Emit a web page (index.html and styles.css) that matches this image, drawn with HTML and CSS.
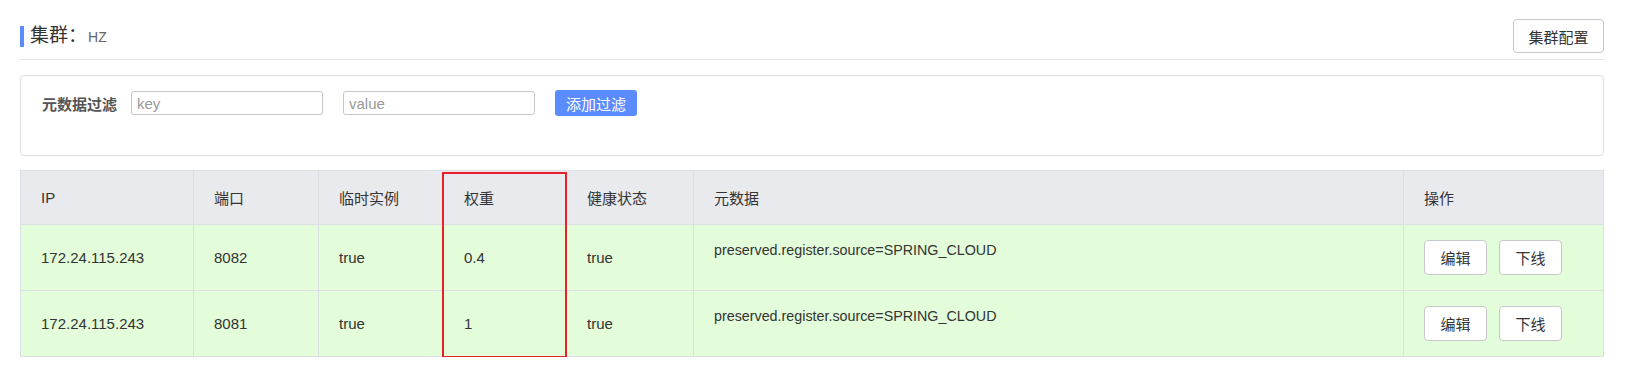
FILE: index.html
```html
<!DOCTYPE html>
<html lang="zh-CN">

<head>
    <meta charset="UTF-8">
    <meta name="viewport" content="width=device-width, initial-scale=1.0">
    <title>集群</title>
    <link rel="stylesheet" href="styles.css">
</head>

<body>
    <div class="page">
        <div class="page-header">
            <h1 class="title">集群：<small>HZ</small></h1>
            <button class="btn">集群配置</button>
        </div>

        <div class="filter-card">
            <div class="filter-row">
                <label>元数据过滤</label>
                <input type="text" placeholder="key">
                <input type="text" placeholder="value">
                <button class="btn-primary">添加过滤</button>
            </div>
        </div>

        <div class="table-wrap">
            <table class="instances">
                <colgroup>
                    <col style="width: 173px">
                    <col style="width: 125px">
                    <col style="width: 125px">
                    <col style="width: 123px">
                    <col style="width: 127px">
                    <col>
                    <col style="width: 200px">
                </colgroup>
                <thead>
                    <tr>
                        <th>IP</th>
                        <th>端口</th>
                        <th>临时实例</th>
                        <th>权重</th>
                        <th>健康状态</th>
                        <th>元数据</th>
                        <th>操作</th>
                    </tr>
                </thead>
                <tbody>
                    <tr>
                        <td>172.24.115.243</td>
                        <td>8082</td>
                        <td>true</td>
                        <td>0.4</td>
                        <td>true</td>
                        <td class="meta">preserved.register.source=SPRING_CLOUD</td>
                        <td>
                            <div class="ops">
                                <button class="btn btn-small">编辑</button>
                                <button class="btn btn-small">下线</button>
                            </div>
                        </td>
                    </tr>
                    <tr>
                        <td>172.24.115.243</td>
                        <td>8081</td>
                        <td>true</td>
                        <td>1</td>
                        <td>true</td>
                        <td class="meta">preserved.register.source=SPRING_CLOUD</td>
                        <td>
                            <div class="ops">
                                <button class="btn btn-small">编辑</button>
                                <button class="btn btn-small">下线</button>
                            </div>
                        </td>
                    </tr>
                </tbody>
            </table>
            <div class="highlight"></div>
        </div>
    </div>
</body>

</html>
```

FILE: styles.css
```css
* {
    font-family: "Liberation Sans", "Noto Sans CJK SC", sans-serif;
    box-sizing: border-box;
}

body {
    margin: 0;
    background-color: #FFFFFF;
    color: #333333;
}

.page {
    padding: 0 22px 0 20px;
}

.page-header {
    display: flex;
    justify-content: space-between;
    align-items: center;
    height: 60px;
    padding-top: 13px;
    border-bottom: 1px solid #E6E6E6;
}

.title {
    margin: 0;
    padding-left: 6px;
    border-left: 4px solid #5B8CFF;
    font-size: 19px;
    font-weight: normal;
    line-height: 20px;
    color: #333333;
}

.title>small {
    font-size: 14px;
    color: #666666;
    margin-left: 1px;
}

.btn {
    height: 34px;
    padding: 0 14px;
    font-size: 15px;
    color: #333333;
    background-color: #FFFFFF;
    border: 1px solid #C8C9CC;
    border-radius: 4px;
    cursor: pointer;
}

.page-header>.btn {
    width: 91px;
}

.filter-card {
    margin-top: 15px;
    padding: 15px 20px 40px 21px;
    border: 1px solid #DCDFE6;
    border-radius: 4px;
}

.filter-row {
    display: flex;
    align-items: center;
    height: 24px;
}

.filter-row>label {
    font-size: 15px;
    font-weight: 600;
    color: #555555;
    margin-right: 14px;
}

.filter-row>input {
    width: 192px;
    height: 24px;
    margin-right: 20px;
    padding: 0 5px;
    font-size: 15px;
    color: #333333;
    border: 1px solid #C4C6CC;
    border-radius: 3px;
}

.filter-row>input::placeholder {
    color: #9A9A9A;
}

.btn-primary {
    width: 82px;
    height: 26px;
    padding: 0;
    font-size: 15px;
    color: #FFFFFF;
    background-color: #5B8CFF;
    border: none;
    border-radius: 3px;
    cursor: pointer;
}

.table-wrap {
    position: relative;
    margin-top: 14px;
}

.instances {
    width: 100%;
    border-collapse: collapse;
    table-layout: fixed;
    font-size: 15px;
}

.instances th,
.instances td {
    border: 1px solid #DCDFE6;
    padding: 0 20px;
    text-align: left;
    vertical-align: middle;
    color: #333333;
}

.instances th {
    height: 54px;
    font-weight: normal;
    background-color: #E9EAEE;
}

.instances td {
    height: 66px;
    background-color: #E3FCD9;
}

.instances td.meta {
    vertical-align: top;
    padding-top: 16px;
    line-height: 18px;
    font-size: 14.3px;
}

.ops {
    display: flex;
    gap: 12px;
}

.btn-small {
    width: 63px;
    height: 35px;
    padding: 0;
}

.highlight {
    position: absolute;
    left: 422px;
    top: 2px;
    width: 125px;
    height: 186px;
    border: 2px solid #E8202A;
    pointer-events: none;
}
```
